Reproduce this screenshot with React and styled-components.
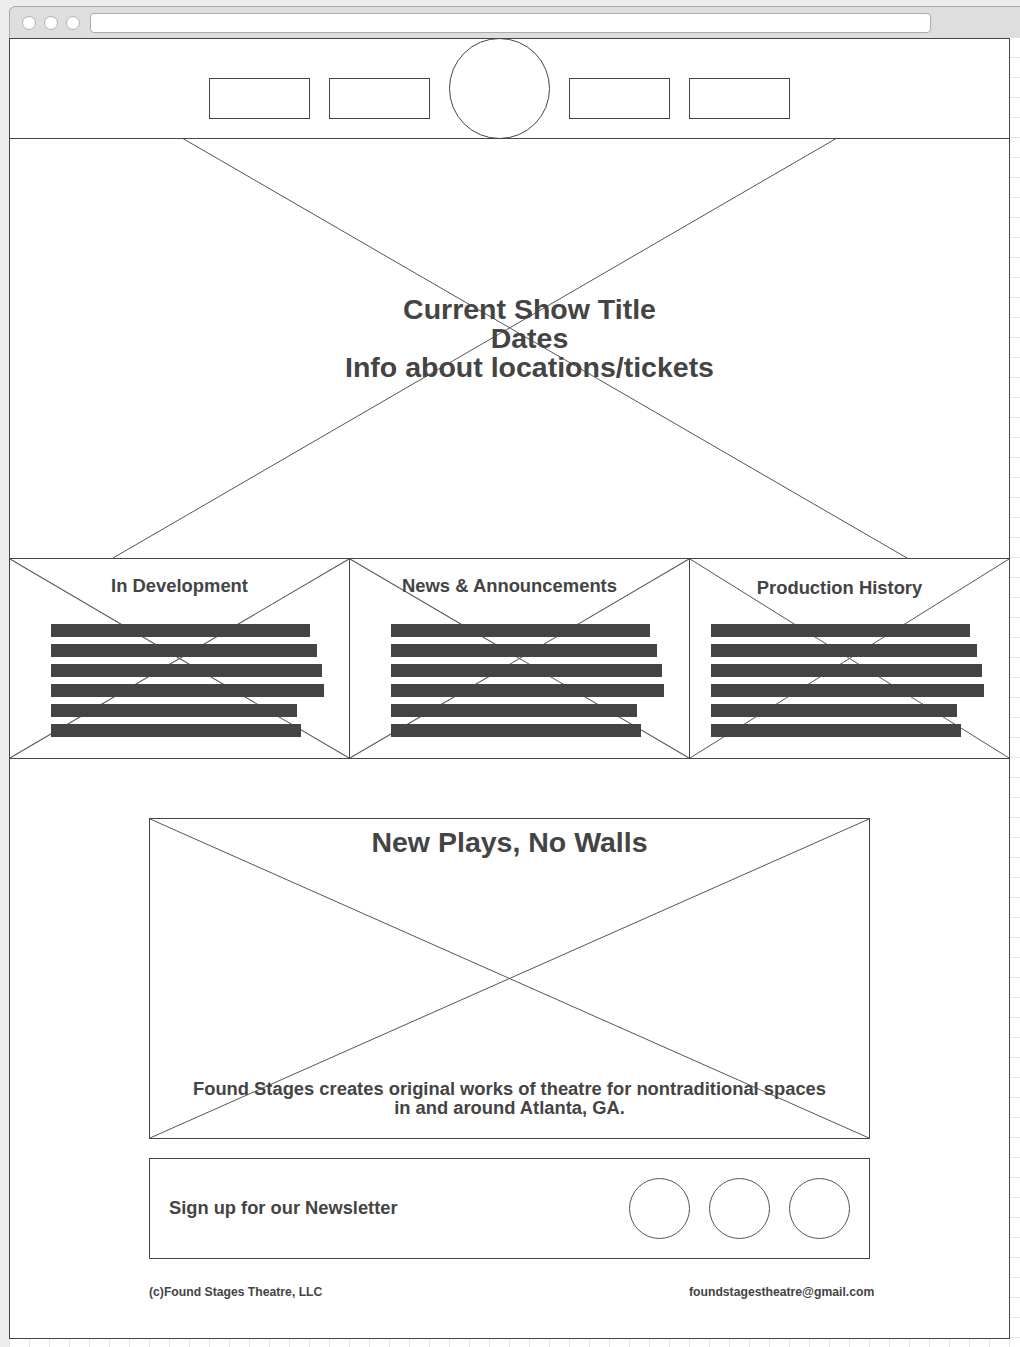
import React from 'react'
import styled, { createGlobalStyle } from 'styled-components'

const INK = '#444'

const GlobalStyle = createGlobalStyle`
  html, body {
    margin: 0;
    padding: 0;
  }
  body {
    font-family: "Liberation Sans", Arial, Helvetica, sans-serif;
    color: ${INK};
    background-color: #fff;
    background-image:
      linear-gradient(#e6e6e6 1px, transparent 1px),
      linear-gradient(90deg, #e6e6e6 1px, transparent 1px);
    background-size: 20px 20px;
    background-position: 9px 17px;
  }
`

const Page = styled.div`
  min-height: 1347px;
  box-sizing: border-box;
  border-left: 9px solid #ececec;
  border-top: 6px solid #ececec;
`

const Chrome = styled.div`
  height: 32px;
  box-sizing: border-box;
  border-top: 1px solid #a8a8a8;
  border-left: 1px solid #a8a8a8;
  border-top-left-radius: 6px;
  background: #dedede;
  display: flex;
  align-items: center;
  gap: 8px;
  padding-left: 12px;
`

const Light = styled.span`
  width: 14px;
  height: 14px;
  box-sizing: border-box;
  border: 1px solid #b2b2b2;
  border-radius: 50%;
  background: #fff;
`

const Address = styled.div`
  width: 841px;
  height: 20px;
  margin-left: 2px;
  box-sizing: border-box;
  border: 1px solid #ababab;
  border-radius: 4px;
  background: #fff;
`

const Frame = styled.div`
  width: 1001px;
  height: 1301px;
  box-sizing: border-box;
  border: 1px solid ${INK};
  background: #fff;
  display: flex;
  flex-direction: column;
`

const Nav = styled.nav`
  height: 100px;
  flex-shrink: 0;
  box-sizing: border-box;
  border-bottom: 1px solid ${INK};
  display: flex;
  align-items: flex-start;
  gap: 19px;
  padding-left: 199px;
`

const NavBox = styled.div`
  width: 101px;
  height: 41px;
  margin-top: 39px;
  box-sizing: border-box;
  border: 1px solid ${INK};
`

const Logo = styled.div`
  width: 101px;
  height: 101px;
  margin-top: -1px;
  box-sizing: border-box;
  border: 1px solid ${INK};
  border-radius: 50%;
`

const Cross = styled.svg`
  position: absolute;
  inset: 0;
  width: 100%;
  height: 100%;
  overflow: visible;
  line {
    stroke: #555;
    stroke-width: 1;
  }
`

const Hero = styled.section`
  position: relative;
  height: 419px;
  flex-shrink: 0;
  box-sizing: border-box;
  padding: 156px 0 0 40px;
  display: flex;
  flex-direction: column;
  align-items: center;
`

const HeroLine = styled.div`
  position: relative;
  font-size: 28.5px;
  font-weight: 700;
  line-height: 29px;
`

const Columns = styled.div`
  display: flex;
  height: 201px;
  flex-shrink: 0;
  box-sizing: border-box;
  border-top: 1px solid ${INK};
  border-bottom: 1px solid ${INK};
`

const Column = styled.div`
  position: relative;
  width: ${p => p.$w}px;
  box-sizing: border-box;
  border-left: ${p => (p.$first ? 'none' : `1px solid ${INK}`)};
  padding-top: ${p => p.$top}px;
`

const ColTitle = styled.h3`
  position: relative;
  margin: 0;
  padding-right: ${p => p.$shift}px;
  font-size: 18.4px;
  font-weight: 700;
  line-height: 20px;
  text-align: center;
`

const Bars = styled.div`
  position: relative;
  display: flex;
  flex-direction: column;
  gap: 7px;
  margin-top: ${p => p.$gap}px;
  padding-left: ${p => p.$pad}px;
`

const Bar = styled.div`
  height: 13px;
  background: ${INK};
`

const Feature = styled.section`
  position: relative;
  width: 721px;
  height: 321px;
  margin: 59px auto 0;
  box-sizing: border-box;
  border: 1px solid ${INK};
  padding: 7px 20px 21px;
  display: flex;
  flex-direction: column;
  justify-content: space-between;
  text-align: center;
`

const FeatureTitle = styled.h2`
  position: relative;
  margin: 0;
  font-size: 28.5px;
  font-weight: 700;
  line-height: 32px;
`

const FeatureText = styled.p`
  position: relative;
  margin: 0;
  font-size: 18.35px;
  font-weight: 700;
  line-height: 19px;
`

const Newsletter = styled.div`
  width: 721px;
  height: 101px;
  margin: 19px auto 0;
  box-sizing: border-box;
  border: 1px solid ${INK};
  padding: 0 19px;
  display: flex;
  align-items: center;
  justify-content: space-between;
  font-size: 18.3px;
  font-weight: 700;
`

const SignUp = styled.span`
  margin-top: -2px;
`

const Socials = styled.div`
  display: flex;
  gap: 19px;
`

const Social = styled.div`
  width: 61px;
  height: 61px;
  box-sizing: border-box;
  border: 1px solid #555;
  border-radius: 50%;
`

const Footer = styled.footer`
  margin: 26px 0 0 139px;
  display: grid;
  grid-template-columns: 540px auto;
  font-size: 12.2px;
  font-weight: 700;
  line-height: 14px;
`

const BAR_WIDTHS = [259, 266, 271, 273, 246, 250]

const columns = [
  { title: 'In Development', w: 339, top: 17, gap: 28, pad: 41, shift: 0 },
  { title: 'News & Announcements', w: 340, top: 17, gap: 28, pad: 41, shift: 20 },
  { title: 'Production History', w: 320, top: 19, gap: 26, pad: 21, shift: 20 },
]

// simple X placeholder, corner to corner
const BoxCross = () => (
  <Cross viewBox="0 0 100 100" preserveAspectRatio="none">
    <line x1="0" y1="0" x2="100" y2="100" vectorEffect="non-scaling-stroke" />
    <line x1="100" y1="0" x2="0" y2="100" vectorEffect="non-scaling-stroke" />
  </Cross>
)

export default function App() {
  return (
    <>
      <GlobalStyle />
      <Page>
        <Chrome>
          <Light />
          <Light />
          <Light />
          <Address />
        </Chrome>
        <Frame>
          <Nav>
            <NavBox />
            <NavBox />
            <Logo />
            <NavBox />
            <NavBox />
          </Nav>

          <Hero>
            <Cross viewBox="0 0 999 419" preserveAspectRatio="none">
              <line x1="172" y1="-1" x2="897" y2="419" />
              <line x1="827" y1="-1" x2="103" y2="419" />
            </Cross>
            <HeroLine>Current Show Title</HeroLine>
            <HeroLine>Dates</HeroLine>
            <HeroLine>Info about locations/tickets</HeroLine>
          </Hero>

          <Columns>
            {columns.map((c, i) => (
              <Column key={c.title} $w={c.w} $top={c.top} $first={i === 0}>
                <BoxCross />
                <ColTitle $shift={c.shift}>{c.title}</ColTitle>
                <Bars $gap={c.gap} $pad={c.pad}>
                  {BAR_WIDTHS.map((w, j) => (
                    <Bar key={j} style={{ width: w }} />
                  ))}
                </Bars>
              </Column>
            ))}
          </Columns>

          <Feature>
            <BoxCross />
            <FeatureTitle>New Plays, No Walls</FeatureTitle>
            <FeatureText>
              Found Stages creates original works of theatre for nontraditional spaces
              <br />
              in and around Atlanta, GA.
            </FeatureText>
          </Feature>

          <Newsletter>
            <SignUp>Sign up for our Newsletter</SignUp>
            <Socials>
              <Social />
              <Social />
              <Social />
            </Socials>
          </Newsletter>

          <Footer>
            <span>(c)Found Stages Theatre, LLC</span>
            <span>foundstagestheatre@gmail.com</span>
          </Footer>
        </Frame>
      </Page>
    </>
  )
}
